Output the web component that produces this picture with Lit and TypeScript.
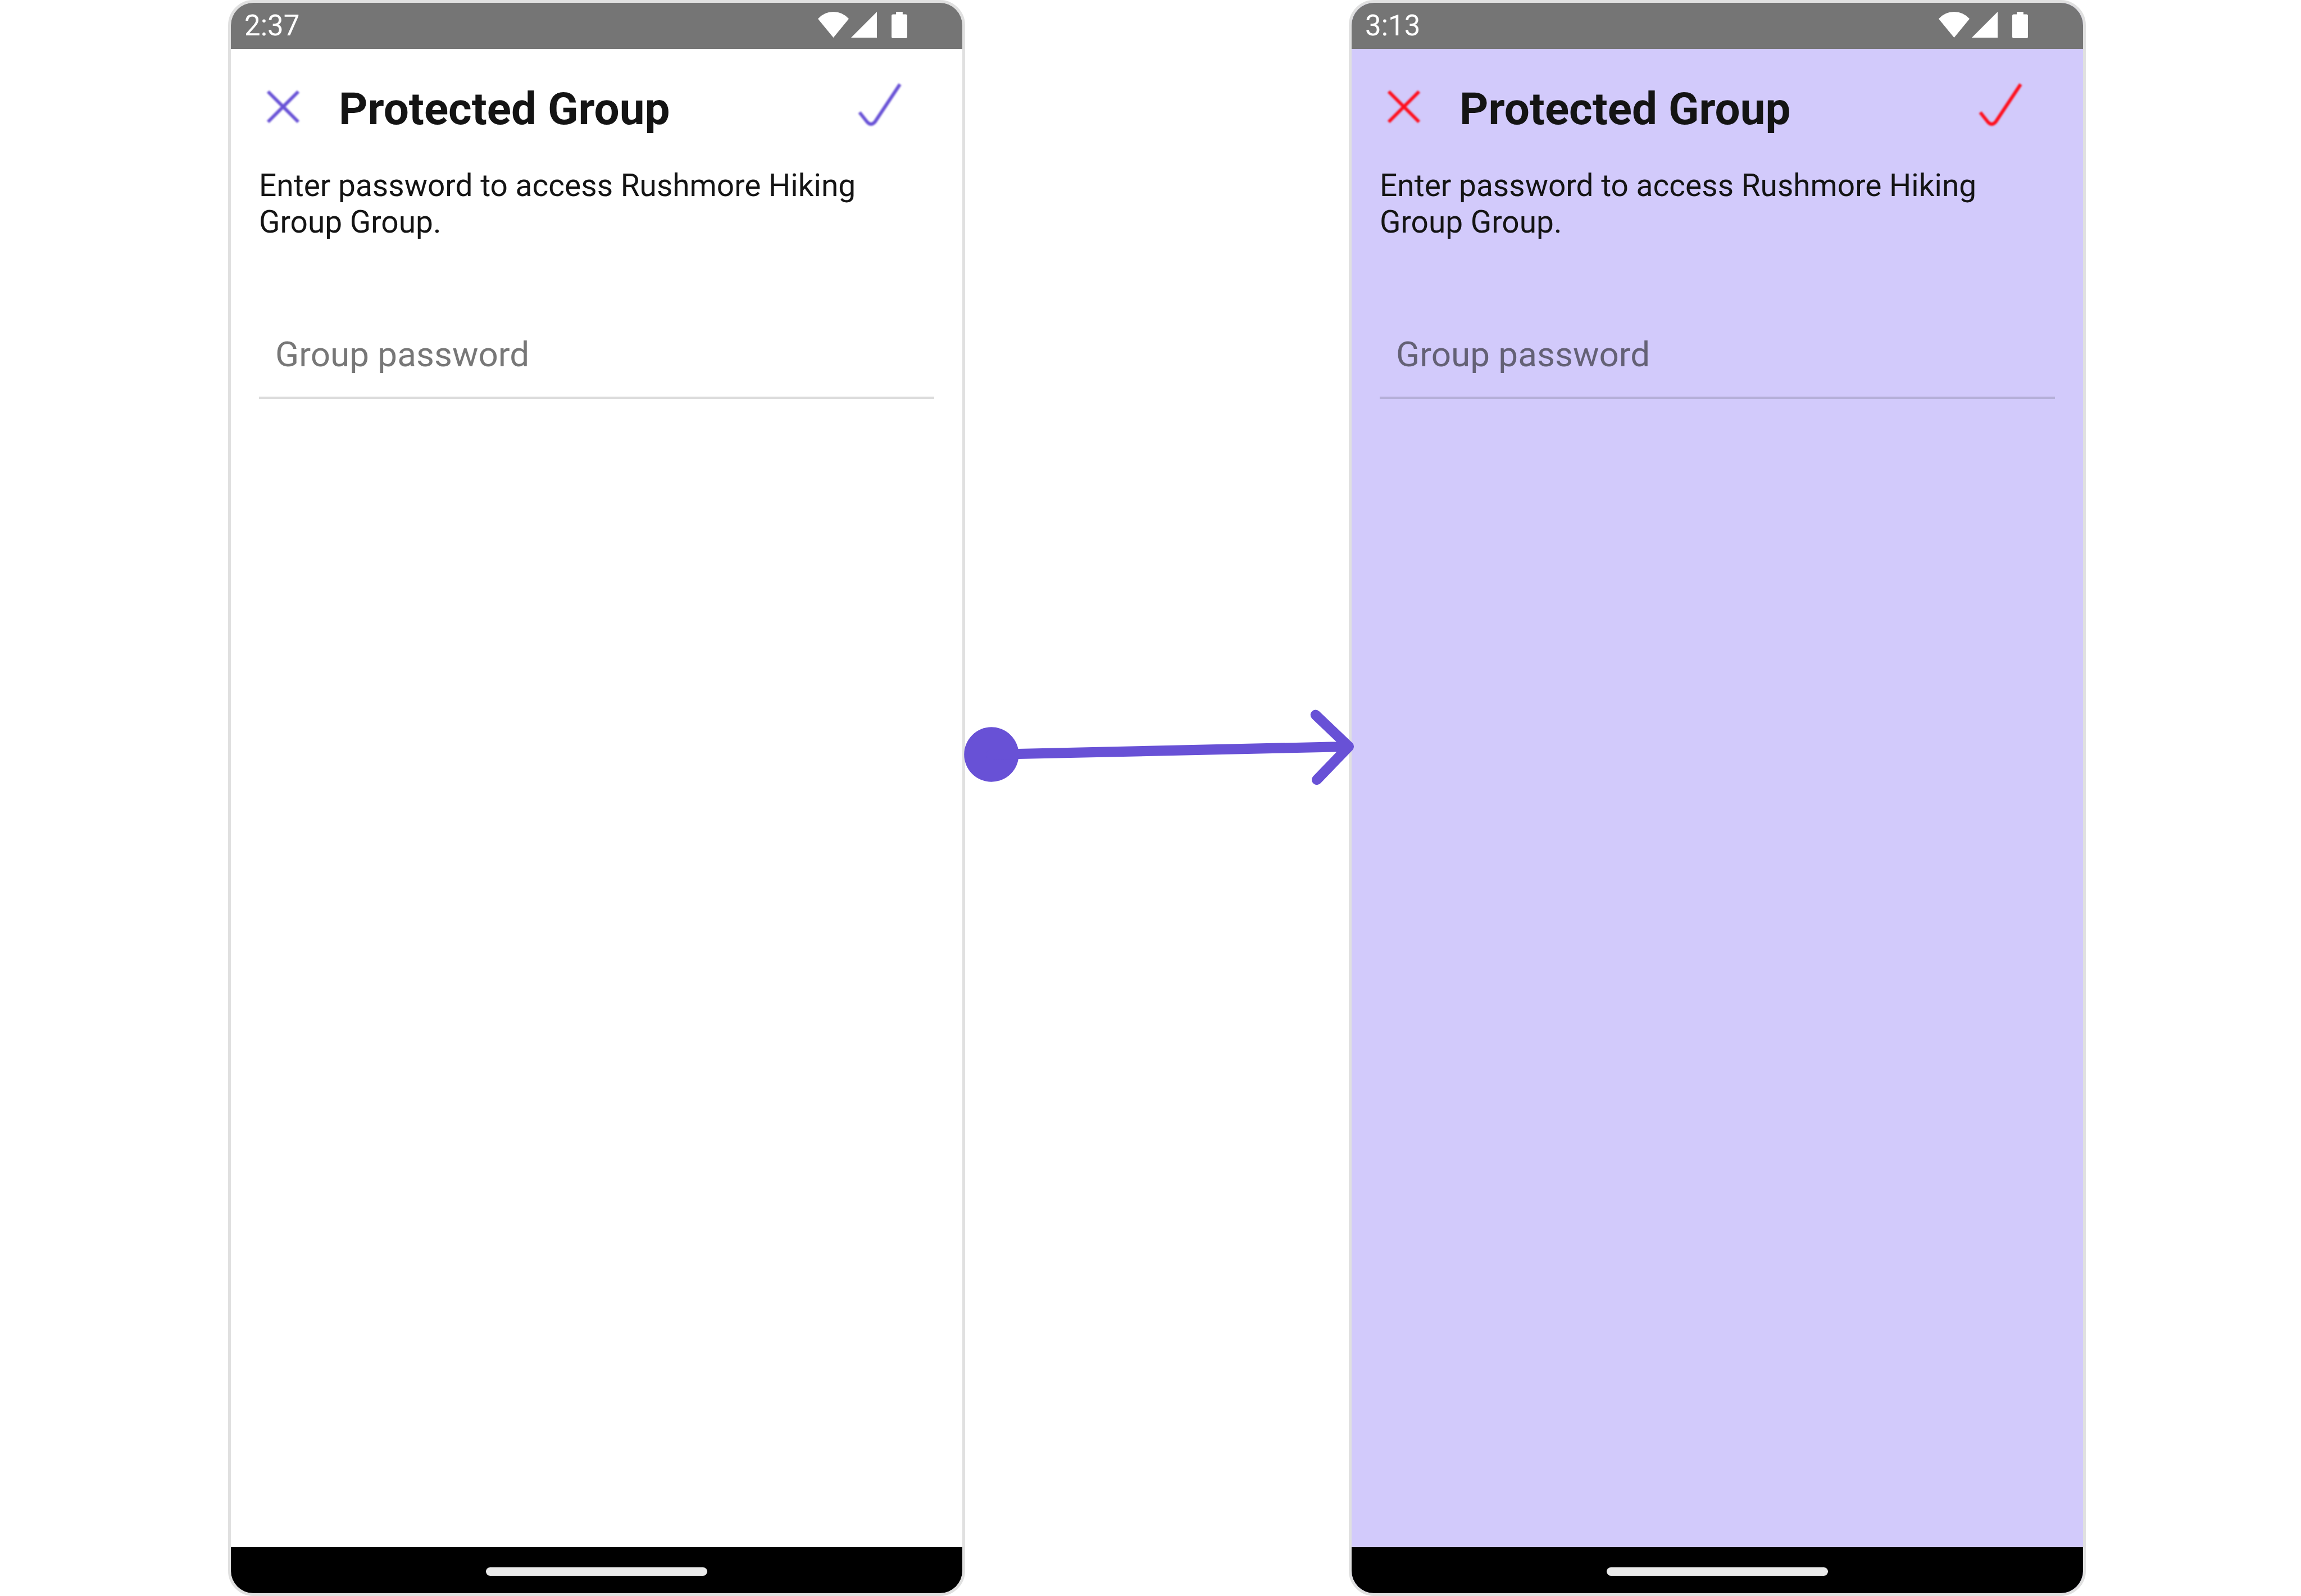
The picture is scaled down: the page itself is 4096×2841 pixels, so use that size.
import { LitElement, html, css } from "lit";
import { customElement, property } from "lit/decorators.js";

@customElement("phone-screen")
class PhoneScreen extends LitElement {
  @property() time = "";
  @property() group = "";
  @property({ reflect: true }) theme = "light";

  static styles = css`
    :host {
      --accent: #6851d6;
      --surface: #ffffff;
      box-sizing: border-box;
      display: flex;
      flex-direction: column;
      min-width: 0;
      overflow: hidden;
      border: 5px solid #e0e0e0;
      border-radius: 45px;
      background: var(--surface);
      color: #141414;
      font-family: Roboto, "Liberation Sans", sans-serif;
    }
    :host([theme="tinted"]) {
      --accent: #ff0d1a;
      --surface: #d2cafb;
    }
    .status {
      display: flex;
      align-items: center;
      box-sizing: border-box;
      height: 82px;
      padding: 0 98px 0 24px;
      background: #757575;
      color: #ffffff;
      font-size: 51px;
      line-height: 60px;
    }
    .time {
      flex: 1;
    }
    .icons {
      display: flex;
      align-items: center;
      padding-bottom: 4px;
      fill: currentColor;
    }
    .icons svg {
      display: block;
    }
    .signal {
      margin: 0 26px 0 4px;
    }
    .content {
      flex: 1;
      display: flex;
      flex-direction: column;
      padding: 0 50px;
    }
    .toolbar {
      display: flex;
      align-items: center;
      padding-top: 57px;
      height: 92px;
    }
    .title {
      flex: 1;
      margin: 0;
      padding: 8px 0 0 54px;
      font-size: 80px;
      line-height: 92px;
      font-weight: 700;
    }
    .action {
      display: flex;
      padding: 0;
      border: 0;
      background: none;
      color: var(--accent);
    }
    .action svg {
      display: block;
      overflow: visible;
      fill: none;
      stroke: currentColor;
      stroke-width: 6;
      stroke-linejoin: round;
      filter: blur(1.5px);
    }
    .confirm {
      margin-right: 52px;
    }
    .message {
      margin: 62px 0 0;
      font-size: 55px;
      line-height: 65px;
    }
    .field {
      margin-top: 126px;
      box-sizing: border-box;
      width: 100%;
      height: 156px;
      padding: 0 29px;
      border: 0;
      border-bottom: 4px solid rgba(20, 20, 20, 0.15);
      border-radius: 0;
      outline: none;
      background: transparent;
      color: inherit;
      font: inherit;
      font-size: 62px;
    }
    .field::placeholder {
      color: rgba(20, 20, 20, 0.58);
      opacity: 1;
    }
    .nav {
      display: flex;
      justify-content: center;
      align-items: center;
      box-sizing: border-box;
      height: 82px;
      padding-top: 5px;
      background: #000000;
    }
    .pill {
      width: 394px;
      height: 15px;
      border-radius: 8px;
      background: #eaeaea;
    }
  `;

  render() {
    const message = `Enter password to access ${this.group} Group.`;
    return html`
      <header class="status">
        <span class="time">${this.time}</span>
        <span class="icons">
          <svg width="55" height="46" viewBox="0 0 60 50" aria-hidden="true">
            <path d="M30 50L0 13.5Q12.5 0 30 0Q47.5 0 60 13.5Z" />
          </svg>
          <svg class="signal" width="46" height="46" viewBox="0 0 50 50" aria-hidden="true">
            <path d="M50 0V50H0Z" />
          </svg>
          <svg width="28" height="47" viewBox="0 0 31 52" aria-hidden="true">
            <path d="M9 0H22V5H28Q31 5 31 8V49Q31 52 28 52H3Q0 52 0 49V8Q0 5 3 5H9Z" />
          </svg>
        </span>
      </header>
      <main class="content">
        <div class="toolbar">
          <button class="action" type="button" aria-label="Close">
            <svg width="88" height="88" viewBox="0 0 88 88">
              <path d="M16 17L70 71M70 17L16 71" />
            </svg>
          </button>
          <h1 class="title">Protected Group</h1>
          <button class="action confirm" type="button" aria-label="Confirm">
            <svg width="88" height="88" viewBox="0 0 88 88">
              <path d="M7 54L20.5 71Q27.5 79 34.5 71L79 4" />
            </svg>
          </button>
        </div>
        <p class="message">${message}</p>
        <input class="field" type="password" placeholder="Group password" aria-label="Group password" />
      </main>
      <footer class="nav"><span class="pill"></span></footer>
    `;
  }
}

@customElement("app-root")
class AppRoot extends LitElement {
  static styles = css`
    :host {
      display: grid;
      grid-template-columns: 406fr 1312fr 683fr 1312fr 383fr;
      min-height: 100vh;
      background: #ffffff;
    }
    .before {
      grid-column: 2;
    }
    .link {
      grid-column: 3;
      z-index: 1;
      padding-top: 1263px;
    }
    .link svg {
      display: block;
      width: 100%;
      overflow: visible;
      fill: none;
      stroke: #6851d6;
      stroke-width: 20;
      stroke-linecap: round;
      stroke-linejoin: round;
    }
    .dot {
      fill: #6851d6;
      stroke: none;
    }
    .after {
      grid-column: 4;
    }
  `;

  render() {
    return html`
      <phone-screen class="before" time="2:37" group="Rushmore Hiking Group"></phone-screen>
      <div class="link">
        <svg viewBox="0 0 751 148" aria-hidden="true">
          <circle class="dot" cx="51.5" cy="88" r="53.5" />
          <path d="M51 88L751 72.5M686 10.5L751 72.5L688.5 137.5" />
        </svg>
      </div>
      <phone-screen class="after" theme="tinted" time="3:13" group="Rushmore Hiking Group"></phone-screen>
    `;
  }
}
